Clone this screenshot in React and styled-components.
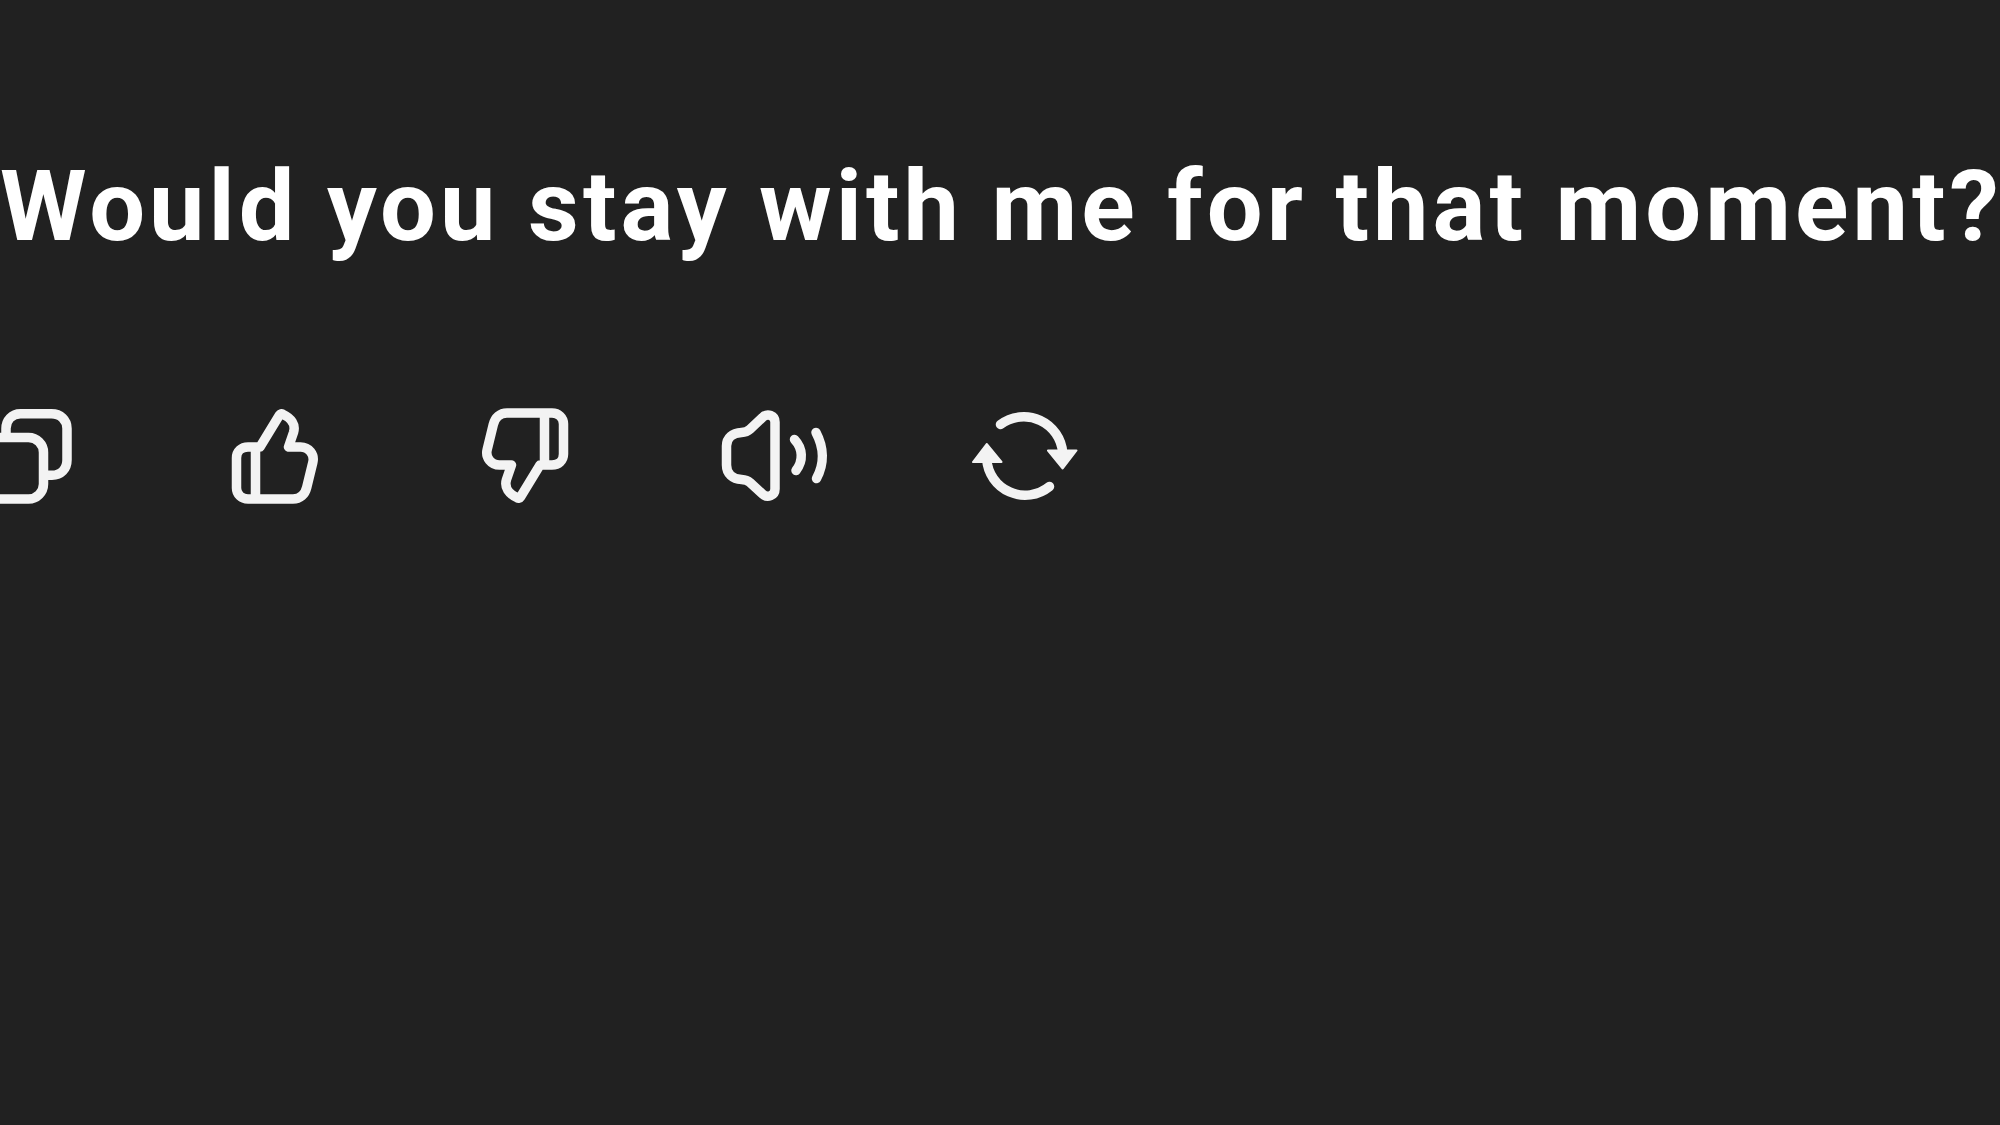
import React from 'react'
import styled, {createGlobalStyle} from 'styled-components'

const GlobalStyle = createGlobalStyle`
    body {
        margin: 0;
        background-color: #212121;
    }
`
const Page = styled.main`
    min-height: 100vh;
    overflow: hidden;
    background-color: #212121;
`
const Message = styled.p`
    margin: 146px 0 0;
    color: #fff;
    font-family: Roboto, "Liberation Sans", sans-serif;
    font-size: 99px;
    font-weight: 700;
    line-height: 120px;
    letter-spacing: 4px;
    white-space: nowrap;
`
const Actions = styled.div`
    display: flex;
    gap: 120px;
    margin: 124px 0 0 -40px;
`
const ActionButton = styled.button`
    display: flex;
    padding: 0;
    border: 0;
    color: #f3f3f3;
    background: none;
    cursor: pointer;
`
const Icon = styled.svg`
    width: 130px;
    height: 130px;
    fill: none;
    stroke: currentColor;
    stroke-width: 9.5;
    stroke-linecap: round;
    stroke-linejoin: round;
`

const thumbPath = 'M45.5 109H38C31.5 109 26.5 104.3 26.5 98V68C26.5 61.5 31.5 57 38 57H50L69.5 25C70.3 23.7 71.5 23.5 72.8 24.2C81 28 86 34.5 83.5 42.5L78.5 57H90.5C99 57 104.8 64.5 102.8 72.5L96.7 97.5C95 104.5 90 109 83 109ZM45.5 57V109'

function CopyIcon(){
    return (
        <Icon viewBox="0 0 130 130" aria-hidden="true">
            <rect x="22" y="47.5" width="61.5" height="61.5" rx="15" />
            <path strokeLinecap="butt" d="M46 47.5V38.5C46 30 52 23.8 60.5 23.8H91.5C100.5 23.8 107 30 107 38.5V70C107 79 101 85.2 92 85.2H83.5" />
        </Icon>
    )
}

function ThumbUpIcon(){
    return (
        <Icon viewBox="0 0 130 130" aria-hidden="true">
            <path d={thumbPath} />
        </Icon>
    )
}

function ThumbDownIcon(){
    return (
        <Icon viewBox="0 0 130 130" aria-hidden="true">
            <path transform="rotate(180 65 66)" d={thumbPath} />
        </Icon>
    )
}

function SpeakerIcon(){
    return (
        <Icon viewBox="0 0 130 130" aria-hidden="true">
            <path d="M65 32V99C65 105.5 57.5 108.5 52.5 104L40 92.5C37.5 90.3 35 89.7 31.5 89.5C22.5 89 16.5 83.5 16.5 75V56C16.5 47.5 22.5 43 31.5 42.5C35 42.3 37.5 41.5 40 39.2L52.5 27.5C57.5 22.5 65 25.5 65 32Z" />
            <path d="M84.5 49.5C93 58.5 93.5 71 86 80.5M106 42.5C114 57.5 114.5 74 106.5 88.5" />
        </Icon>
    )
}

function RefreshIcon(){
    return (
        <Icon viewBox="0 0 130 130" aria-hidden="true">
            <path d="M40.5 34.5A39 39 0 0 1 102.7 63M89.5 96.5A38.5 38.5 0 0 1 26.7 69" />
            <path fill="currentColor" strokeWidth="2" d="M88 60.5H116.5L102.7 78.5ZM13 72H41.5L26.7 54Z" />
        </Icon>
    )
}

const actions = [
    {label: 'Copy', Glyph: CopyIcon},
    {label: 'Good response', Glyph: ThumbUpIcon},
    {label: 'Bad response', Glyph: ThumbDownIcon},
    {label: 'Read aloud', Glyph: SpeakerIcon},
    {label: 'Regenerate', Glyph: RefreshIcon},
]

function App(){
    return (
        <>
            <GlobalStyle />
            <Page>
                <Message>Would you stay with me for that moment?</Message>
                <Actions>
                    {actions.map(({label, Glyph}) => (
                        <ActionButton key={label} type="button" aria-label={label}>
                            <Glyph />
                        </ActionButton>
                    ))}
                </Actions>
            </Page>
        </>
    )
}

export default App
